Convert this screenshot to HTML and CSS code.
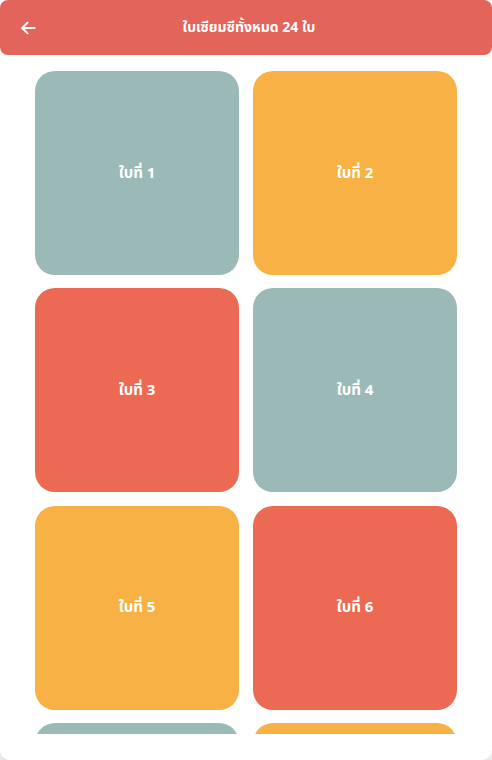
FILE: index.html
```html
<!DOCTYPE html>
<html lang="th">
<head>
<meta charset="utf-8">
<title>ใบเซียมซีทั้งหมด 24 ใบ</title>
<link rel="stylesheet" href="styles.css">
</head>
<body>
<div class="app">
  <header class="topbar">
    <button class="back" aria-label="back">
      <svg width="20" height="20" viewBox="0 0 24 24"><path d="M20 12H5M11.5 5.5L5 12l6.5 6.5" fill="none" stroke="#fff" stroke-width="2.4" stroke-linecap="round" stroke-linejoin="round"/></svg>
    </button>
    <h1 class="title">ใบเซียมซีทั้งหมด 24 ใบ</h1>
  </header>
  <main class="scroller">
    <div class="grid">
      <div class="card teal">ใบที่ 1</div>
      <div class="card orange">ใบที่ 2</div>
      <div class="card red">ใบที่ 3</div>
      <div class="card teal">ใบที่ 4</div>
      <div class="card orange">ใบที่ 5</div>
      <div class="card red">ใบที่ 6</div>
      <div class="card teal"></div>
      <div class="card orange"></div>
    </div>
  </main>
</div>
</body>
</html>
```
FILE: styles.css
```css
html, body {
  margin: 0;
  padding: 0;
  background: #e9e9e9;
}
body {
  font-family: "Noto Sans", "Noto Sans Thai", "Noto Sans CJK SC", sans-serif;
}
.app {
  width: 492px;
  height: 760px;
  background: #ffffff;
  border-radius: 0 0 10px 10px;
  overflow: hidden;
  display: flex;
  flex-direction: column;
}
.topbar {
  height: 55px;
  flex: none;
  background: #e2645a;
  border-radius: 8px;
  display: flex;
  align-items: center;
  justify-content: center;
  position: relative;
}
.back {
  position: absolute;
  left: 17px;
  top: 17px;
  width: 22px;
  height: 22px;
  padding: 0;
  border: 0;
  background: none;
  display: flex;
  align-items: center;
  justify-content: center;
}
.title {
  margin: 0;
  padding-left: 6px;
  color: #fff;
  font-size: 14px;
  font-weight: 700;
}
.scroller {
  height: 679px;
  flex: none;
  overflow: hidden;
}
.grid {
  padding: 16px 35px;
  display: grid;
  grid-template-columns: 204px 204px;
  grid-auto-rows: 204px;
  column-gap: 14px;
  row-gap: 13.3px;
}
.card {
  border-radius: 20px;
  display: flex;
  align-items: center;
  justify-content: center;
  color: #fff;
  font-size: 15px;
  font-weight: 700;
}
.teal { background: #9bbab7; }
.orange { background: #f7b144; }
.red { background: #ec6a53; }
```
